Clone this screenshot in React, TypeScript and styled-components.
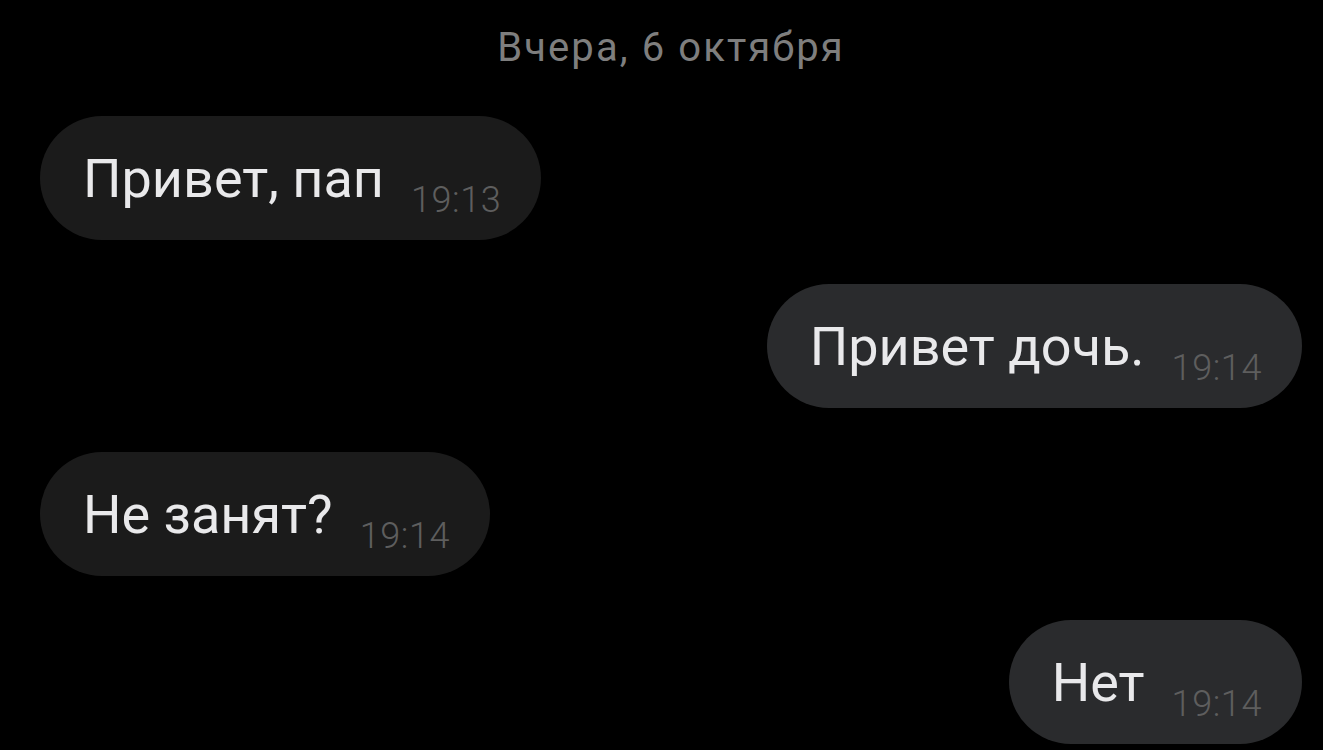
import React from "react";
import styled, { createGlobalStyle } from "styled-components";

const GlobalStyle = createGlobalStyle`
  html, body {
    margin: 0;
    padding: 0;
    background: #000000;
  }
  body {
    font-family: Roboto, "Noto Sans", "Liberation Sans", sans-serif;
    -webkit-font-smoothing: antialiased;
  }
`;

const Screen = styled.div`
  width: 1323px;
  height: 750px;
  overflow: hidden;
  background: #000000;
  box-sizing: border-box;
  padding: 23px 21px 0 40px;
  display: flex;
  flex-direction: column;
`;

const DateLabel = styled.div`
  text-align: center;
  color: #7e7e7e;
  font-size: 40px;
  letter-spacing: 2.1px;
  line-height: 50px;
  margin-bottom: 43px;
`;

const Feed = styled.div`
  display: flex;
  flex-direction: column;
  gap: 44px;
`;

const Row = styled.div<{ mine: boolean }>`
  display: flex;
  justify-content: ${({ mine }) => (mine ? "flex-end" : "flex-start")};
`;

const Bubble = styled.div<{ mine: boolean }>`
  height: 124px;
  box-sizing: border-box;
  border-radius: 62px;
  padding: 0 40px 0 43px;
  background: ${({ mine }) => (mine ? "#2a2b2d" : "#1b1b1b")};
  display: flex;
  align-items: center;
  gap: 27px;
`;

const Text = styled.span`
  color: #e9e9eb;
  font-size: 54px;
  line-height: 55px;
  white-space: nowrap;
`;

const Time = styled.span`
  color: #5e5e5e;
  font-size: 36px;
  font-weight: 300;
  letter-spacing: 0.6px;
  line-height: 35px;
  margin-top: 44px;
`;

type Message = { text: string; time: string; mine: boolean };

const messages: Message[] = [
  { text: "Привет, пап", time: "19:13", mine: false },
  { text: "Привет дочь.", time: "19:14", mine: true },
  { text: "Не занят?", time: "19:14", mine: false },
  { text: "Нет", time: "19:14", mine: true },
];

export default function App() {
  return (
    <>
      <GlobalStyle />
      <Screen>
        <DateLabel>Вчера, 6 октября</DateLabel>
        <Feed>
          {messages.map((m, i) => (
            <Row key={i} mine={m.mine}>
              <Bubble mine={m.mine}>
                <Text>{m.text}</Text>
                <Time>{m.time}</Time>
              </Bubble>
            </Row>
          ))}
        </Feed>
      </Screen>
    </>
  );
}
